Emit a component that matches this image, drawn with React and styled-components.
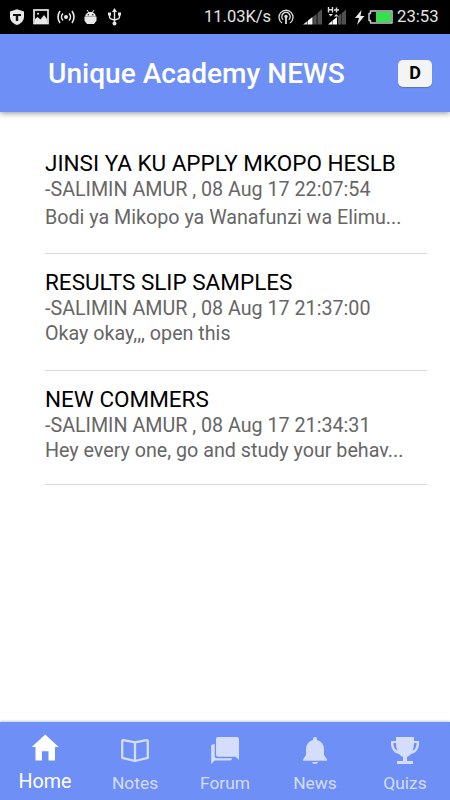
import React from 'react';
import styled, { createGlobalStyle } from 'styled-components';

const GlobalStyle = createGlobalStyle`
  * {
    box-sizing: border-box;
  }
  body {
    margin: 0;
    background: #fff;
    font-family: Roboto, sans-serif;
  }
`;

const Screen = styled.div`
  display: flex;
  flex-direction: column;
  width: 450px;
  height: 800px;
  overflow: hidden;
  background: #fff;
`;

const StatusBar = styled.div`
  display: flex;
  align-items: center;
  justify-content: space-between;
  flex: none;
  height: 34px;
  padding: 0 12px 0 9px;
  background: #000;
  color: #e4e4e4;
  svg {
    display: block;
    flex: none;
  }
`;

const StatusGroup = styled.div`
  display: flex;
  align-items: center;
`;

const StatusText = styled.span`
  font-size: ${({ $size }) => $size}px;
  line-height: 34px;
  width: ${({ $width }) => $width}px;
  white-space: nowrap;
`;

const Header = styled.header`
  display: flex;
  align-items: center;
  justify-content: space-between;
  flex: none;
  height: 78px;
  padding: 0 18px 0 48px;
  background: #6e8ff5;
  box-shadow: 0 1px 6px rgba(0, 0, 0, 0.45);
`;

const HeaderTitle = styled.h1`
  margin: 1px 0 0;
  font-size: 28.1px;
  font-weight: 500;
  line-height: 36px;
  color: #fff;
  white-space: nowrap;
`;

const HeaderButton = styled.button`
  width: 34px;
  height: 27px;
  margin-top: 1px;
  padding: 0 0 2px;
  border: 0;
  border-radius: 5px;
  background: #f4f4f4;
  box-shadow: 0 1px 1px rgba(0, 0, 0, 0.2);
  color: #000;
  font-family: inherit;
  font-size: 18px;
  font-weight: 700;
  line-height: 24px;
`;

const NewsList = styled.main`
  flex: 1;
  padding: 36px 23px 0 45px;
`;

const NewsItem = styled.article`
  height: ${({ $height }) => $height}px;
  margin-bottom: ${({ $gap }) => $gap}px;
  padding-top: 1px;
  border-bottom: 1px solid #d8dada;
  white-space: nowrap;
`;

const NewsTitle = styled.h2`
  margin: 0;
  font-size: 22.5px;
  font-weight: 400;
  line-height: 28px;
  color: #000;
`;

const NewsText = styled.p`
  margin: ${({ $offset }) => $offset || 0}px 0 0;
  font-size: 19.7px;
  line-height: 25px;
  color: #666;
`;

const TabBar = styled.nav`
  display: flex;
  flex: none;
  height: 78px;
  background: #6e8ff5;
  box-shadow: 0 -1px 2px rgba(0, 0, 0, 0.2);
`;

const Tab = styled.a`
  display: flex;
  flex-direction: column;
  align-items: center;
  flex: 1;
  padding-top: ${({ $active }) => ($active ? 11 : 12)}px;
  color: ${({ $active }) => ($active ? '#fff' : '#d4ddfc')};
  svg {
    display: block;
  }
`;

const TabLabel = styled.span`
  margin-top: ${({ $active }) => ($active ? 9 : 7)}px;
  font-size: ${({ $active }) => ($active ? 19.7 : 17.4)}px;
  line-height: 24px;
`;

const ShieldIcon = () => (
  <svg width="16" height="18" viewBox="0 0 16 18">
    <path d="M8 1.200 15 3.500v5c0 4.500-3 7-7 8.500-4-1.500-7-4-7-8.500v-5z" fill="#e8e8e8" />
    <path d="M4 6h8v2H9.200v5H6.800V8H4z" fill="#111" />
  </svg>
);

const ImageIcon = () => (
  <svg width="16" height="16" viewBox="0 0 16 16">
    <rect x="1" y="1" width="14" height="13.500" fill="none" stroke="#e8e8e8" strokeWidth="1.700" />
    <path d="m2 10 2.500-2 3 2.500L11 6l3 4v4H2z" fill="#e8e8e8" />
    <circle cx="5" cy="4.800" r="1" fill="#e8e8e8" />
  </svg>
);

const BroadcastIcon = () => (
  <svg width="18" height="16" viewBox="0 0 18 16" fill="none" stroke="#e8e8e8" strokeWidth="1.600">
    <circle cx="9" cy="8" r="2" fill="#e8e8e8" stroke="none" />
    <path d="M6 4.500a5 5 0 0 0 0 7M12 4.500a5 5 0 0 1 0 7M3 2q-4 6 0 12M15 2q4 6 0 12" />
  </svg>
);

const AndroidIcon = () => (
  <svg width="13" height="16" viewBox="0 0 13 16">
    <path d="m3 1 2 3M10 1 8 4" stroke="#ddd" strokeWidth="1" />
    <path d="M1.300 7.500C1.300 1.500 11.700 1.500 11.700 7.500z" fill="#e8e8e8" />
    <path d="M.5 7.500h12v4.300L10 15H3L.5 11.800z" fill="#e8e8e8" />
    <circle cx="4.300" cy="5.700" r=".8" fill="#222" />
    <circle cx="8.700" cy="5.700" r=".8" fill="#222" />
  </svg>
);

const UsbIcon = () => (
  <svg width="15" height="18" viewBox="0 0 15 18" fill="none" stroke="#e8e8e8" strokeWidth="1.400">
    <path d="M7.500 2v13M2.500 6v3q0 2 5 3 5-1 5-3V6" />
    <path d="M7.500 0 10 4H5zM1 4.500h3v3H1zM11 4.500h3v3h-3z" fill="#e8e8e8" stroke="none" />
    <circle cx="7.500" cy="15.500" r="2" fill="#e8e8e8" stroke="none" />
  </svg>
);

const HotspotIcon = () => (
  <svg width="16" height="16" viewBox="0 0 16 16" fill="none" stroke="#ddd" strokeWidth="1.300">
    <path d="M4 14A7 7 0 1 1 12 14M5.200 10.800A4.200 4.200 0 1 1 10.800 10.800" />
    <circle cx="8" cy="7.500" r="1.700" fill="#ddd" stroke="none" />
    <path d="M8 8v7" strokeWidth="1.800" />
  </svg>
);

const SignalIcon = () => (
  <svg width="19" height="16" viewBox="0 0 19 16">
    <path d="M0 15.500 4.500 12v3.500z" fill="#ddd" />
    <path d="m5 11.500 4.500-3.500v7.500H5z" fill="#fff" />
    <path d="m10.200 7.500 3.500-2.500v10.500h-3.500zM14.500 4 19 0v15.500h-4.500z" fill="#505050" />
  </svg>
);

const DataSignalIcon = () => (
  <svg width="20" height="20" viewBox="0 0 20 20">
    <path d="m1 17.500 4-3.500v3.500zM5.500 13.500l4.500-3.500v7.500H5.500z" fill="#fff" />
    <path d="m11 9 3.500-2.500v11H11zM15 6l4-3.500v15h-4z" fill="#505050" />
    <path
      d="M1.500 0v5.500M5.500 0v5.500M1.500 2.800h4M7 3h5M9.500.500v5"
      fill="none"
      stroke="#ddd"
      strokeWidth="1.400"
    />
    <path d="M1.500 7h4.500L3.700 9.500zM7 9.500h4.500L9.200 7z" fill="#ddd" />
  </svg>
);

const BoltIcon = () => (
  <svg width="10" height="15" viewBox="0 0 10 15">
    <path d="M6.500 0 0 8h4l-2 7 7.500-9H5.500z" fill="#e8e8e8" />
  </svg>
);

const BatteryIcon = () => (
  <svg width="25" height="14" viewBox="0 0 25 14">
    <path d="M2.500 1h21.500v12H2.500v-2.500H1v-7h1.500z" fill="#000" stroke="#ccc" strokeWidth="1.500" strokeLinejoin="round" />
    <path d="M8 2h15v10H8z" fill="#35e04e" />
  </svg>
);

const Spacer = styled.span`
  flex: none;
  width: ${({ $width }) => $width}px;
`;

const HomeIcon = () => (
  <svg width="28" height="28" viewBox="0 0 28 28">
    <path d="M14.200 1.600.700 14h3.800v13.600h6.400v-9.300h6.600v9.300H24V14h3.700z" fill="currentColor" />
  </svg>
);

const BookIcon = () => (
  <svg width="30" height="30" viewBox="0 0 30 30" fill="none" stroke="currentColor" strokeWidth="2.300" strokeLinejoin="round">
    <path d="M15 8.300 3.500 6.100Q2.200 6 2.200 7.300v16.500L15 27l12.800-3.200V7.300q0-1.300-1.300-1.200zM15 8.300V27" />
  </svg>
);

const ChatIcon = () => (
  <svg width="30" height="30" viewBox="0 0 30 30" fill="currentColor">
    <path d="M8 3h19q2 0 2 2v21l-3.500-3.300H8q-2 0-2-2V5q0-2 2-2z" />
    <path d="M4.700 10.300H3q-1.800 0-1.800 2V30l3.500-3.500H20q2 0 2-2.300H6.500q-1.800 0-1.800-1.700z" />
  </svg>
);

const BellIcon = () => (
  <svg width="30" height="30" viewBox="0 0 30 30" fill="currentColor">
    <path d="M15 3q2 0 2 2v1q6.800 2 7 9v6l3 4.500v1.300H3v-1.300L6 21v-6q.2-7 7-9V5q0-2 2-2zM12 28h6q-.3 2-3 2t-3-2z" />
  </svg>
);

const TrophyIcon = () => (
  <svg width="30" height="30" viewBox="0 0 30 30">
    <path d="M6 3h18v4h5v4q-1 7.500-8 9-1.500 2-4 3v4h6v3.500H7V27h6v-4q-2.500-1-4-3-7-1.500-8-9V7h5zM3.500 9v2q.5 4 4 5.800Q6 14 6 9zM26.500 9H24q0 5-1.500 7.800 3.500-1.800 4-5.800z" fill="currentColor" fillRule="evenodd" />
  </svg>
);

const news = [
  {
    title: 'JINSI YA KU APPLY MKOPO HESLB',
    info: '-SALIMIN AMUR , 08 Aug 17 22:07:54',
    text: 'Bodi ya Mikopo ya Wanafunzi wa Elimu...',
    height: 106,
    gap: 13,
    offset: 3,
  },
  {
    title: 'RESULTS SLIP SAMPLES',
    info: '-SALIMIN AMUR , 08 Aug 17 21:37:00',
    text: 'Okay okay,,, open this',
    height: 104,
    gap: 13,
  },
  {
    title: 'NEW COMMERS',
    info: '-SALIMIN AMUR , 08 Aug 17 21:34:31',
    text: 'Hey every one, go and study your behav...',
    height: 101,
    gap: 0,
  },
];

const tabs = [
  { label: 'Home', Icon: HomeIcon, active: true },
  { label: 'Notes', Icon: BookIcon },
  { label: 'Forum', Icon: ChatIcon },
  { label: 'News', Icon: BellIcon },
  { label: 'Quizs', Icon: TrophyIcon },
];

export default function App() {
  return (
    <>
      <GlobalStyle />
      <Screen>
        <StatusBar>
          <StatusGroup>
            <ShieldIcon />
            <Spacer $width={8} />
            <ImageIcon />
            <Spacer $width={8} />
            <BroadcastIcon />
            <Spacer $width={9} />
            <AndroidIcon />
            <Spacer $width={10} />
            <UsbIcon />
          </StatusGroup>
          <StatusGroup>
            <StatusText $size={16.5} $width={74}>11.03K/s</StatusText>
            <HotspotIcon />
            <Spacer $width={9} />
            <SignalIcon />
            <Spacer $width={5} />
            <DataSignalIcon />
            <Spacer $width={8} />
            <BoltIcon />
            <Spacer $width={3} />
            <BatteryIcon />
            <Spacer $width={4} />
            <StatusText $size={16.7} $width={41}>23:53</StatusText>
          </StatusGroup>
        </StatusBar>
        <Header>
          <HeaderTitle>Unique Academy NEWS</HeaderTitle>
          <HeaderButton>D</HeaderButton>
        </Header>
        <NewsList>
          {news.map(({ title, info, text, height, gap, offset }) => (
            <NewsItem key={title} $height={height} $gap={gap}>
              <NewsTitle>{title}</NewsTitle>
              <NewsText>{info}</NewsText>
              <NewsText $offset={offset}>{text}</NewsText>
            </NewsItem>
          ))}
        </NewsList>
        <TabBar>
          {tabs.map(({ label, Icon, active }) => (
            <Tab key={label} $active={active}>
              <Icon />
              <TabLabel $active={active}>{label}</TabLabel>
            </Tab>
          ))}
        </TabBar>
      </Screen>
    </>
  );
}
